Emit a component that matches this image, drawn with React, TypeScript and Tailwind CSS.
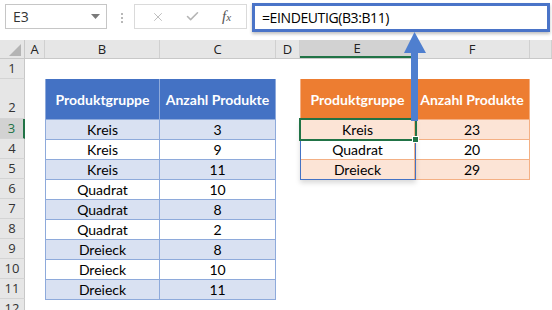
import { X, Check } from 'lucide-react';

const table1 = [
  ['Kreis', '3'],
  ['Kreis', '9'],
  ['Kreis', '11'],
  ['Quadrat', '10'],
  ['Quadrat', '8'],
  ['Quadrat', '2'],
  ['Dreieck', '8'],
  ['Dreieck', '10'],
  ['Dreieck', '11'],
];

const table2 = [
  ['Kreis', '23'],
  ['Quadrat', '20'],
  ['Dreieck', '29'],
];

const colHeads = [
  { key: 'A', cls: 'w-[20px]' },
  { key: 'B', cls: 'w-[115px]' },
  { key: 'C', cls: 'w-[116px]' },
  { key: 'D', cls: 'w-[24px]' },
  { key: 'E', cls: 'w-[115px] bg-[#d2d2d2] border-b-2 border-b-[#217346]' },
  { key: 'F', cls: 'w-[115px]' },
  { key: '', cls: 'flex-1' },
];

const rowHeads = [1, 2, 3, 4, 5, 6, 7, 8, 9, 10, 11, 12];

const cellFont = { fontFamily: 'Lato, "Open Sans", sans-serif' };

export default function App() {
  return (
    <div className="relative w-[552px] h-[310px] overflow-hidden bg-white text-black">
      {/* formula bar */}
      <div className="flex items-start h-[40px] bg-white" style={{ fontFamily: '"Open Sans", "Noto Sans", sans-serif' }}>
        <div className="ml-[5px] mt-[4px] w-[102px] h-[25px] border border-[#c6c6c6] flex items-center justify-between pl-[7px] pr-[6px]">
          <span className="text-[14px] text-[#333]">E3</span>
          <svg width="9" height="5" viewBox="0 0 9 5"><path d="M0 0h9L4.5 5z" fill="#7a7a7a" /></svg>
        </div>
        <div className="ml-[14px] mt-[13px] flex flex-col gap-[2px]">
          <div className="w-[2px] h-[2px] bg-[#b8b8b8]" />
          <div className="w-[2px] h-[2px] bg-[#b8b8b8]" />
          <div className="w-[2px] h-[2px] bg-[#b8b8b8]" />
        </div>
        <div className="ml-[11px] mt-[4px] w-[113px] h-[25px] border border-[#dadada] flex items-center">
          <X className="ml-[16px] w-[14px] h-[14px] text-[#b5b5b5]" strokeWidth={1.5} />
          <Check className="ml-[20px] w-[15px] h-[15px] text-[#b5b5b5]" strokeWidth={2.5} />
          <span className="ml-[22px] text-[15px] italic text-[#555]" style={{ fontFamily: '"Liberation Serif", serif' }}>
            f<span className="text-[11px]">x</span>
          </span>
        </div>
        <div className="ml-[5px] mt-[3px] w-[298px] h-[29px] border-[3px] border-[#4a74c8] flex items-center pl-[7px] shadow-[0_2px_3px_rgba(0,0,0,0.25)] bg-white">
          <span className="text-[14px] text-black tracking-[-0.4px]">=EINDEUTIG(B3:B11)</span>
        </div>
      </div>

      {/* column headers */}
      <div className="flex h-[19px] bg-[#e6e6e6] border-b border-[#c8c8c8] text-[13px] text-[#222]" style={{ fontFamily: '"Open Sans", sans-serif' }}>
        <div className="w-[25px] border-r border-[#c8c8c8] flex items-end justify-end pr-[3px] pb-[2px]">
          <svg width="12" height="12" viewBox="0 0 12 12"><path d="M12 0v12H0z" fill="#b4b4b4" /></svg>
        </div>
        {colHeads.map((c, i) => (
          <div key={i} className={`${c.cls} border-r border-[#d0d0d0] flex items-center justify-center leading-none`}>
            {c.key}
          </div>
        ))}
      </div>

      <div className="flex">
        {/* row headers */}
        <div className="w-[25px] flex flex-col text-[13px] text-[#333]" style={{ fontFamily: '"Open Sans", sans-serif' }}>
          {rowHeads.map((n) => (
            <div
              key={n}
              className={`${n === 2 ? 'h-[40px] items-end pb-[1px]' : 'h-[20px] items-center'} flex justify-center border-b border-[#d4d4d4] ${
                n === 3 ? 'bg-[#d2d2d2] border-r-2 border-r-[#217346] text-[#217346]' : 'bg-[#e6e6e6] border-r border-r-[#c8c8c8]'
              }`}
            >
              {n}
            </div>
          ))}
        </div>

        {/* sheet */}
        <div className="flex flex-col text-[14px]" style={cellFont}>
          <div className="h-[20px]" />
          <div className="flex">
            <div className="w-[20px]" />
            {/* table 1 */}
            <div className="flex flex-col w-[231px]">
              <div className="flex h-[40px] bg-[#4472c4] text-white font-bold">
                <div className="w-[115px] flex items-center justify-center border-l border-r border-[#8eaadb]">Produktgruppe</div>
                <div className="w-[116px] flex items-center justify-center border-r border-[#8eaadb]">Anzahl Produkte</div>
              </div>
              {table1.map(([a, b], i) => (
                <div key={i} className={`flex h-[20px] ${i % 2 === 0 ? 'bg-[#d9e1f2]' : 'bg-white'}`}>
                  <div className="w-[115px] flex items-center justify-center border-l border-r border-t border-[#8eaadb]">{a}</div>
                  <div className="w-[116px] flex items-center justify-center border-r border-t border-[#8eaadb]">{b}</div>
                </div>
              ))}
              <div className="border-t border-[#8eaadb] w-[231px]" />
            </div>
            <div className="w-[24px]" />
            {/* table 2 */}
            <div className="relative flex flex-col w-[230px]">
              <div className="flex h-[40px] bg-[#ed7d31] text-white font-bold">
                <div className="w-[115px] flex items-center justify-center border-l border-r border-[#f4b084]">Produktgruppe</div>
                <div className="w-[115px] flex items-center justify-center border-r border-[#f4b084]">Anzahl Produkte</div>
              </div>
              {table2.map(([a, b], i) => (
                <div key={i} className={`flex h-[20px] ${i % 2 === 0 ? 'bg-[#fce4d6]' : 'bg-white'}`}>
                  <div className="w-[115px] flex items-center justify-center border-l border-r border-t border-[#f4b084]">{a}</div>
                  <div className="w-[115px] flex items-center justify-center border-r border-t border-[#f4b084]">{b}</div>
                </div>
              ))}
              <div className="border-t border-[#f4b084] w-[230px]" />

              {/* spill range */}
              <div className="absolute left-0 top-[40px] w-[116px] h-[61px] border border-[#4472c4] shadow-[0_3px_5px_rgba(0,0,0,0.15)]" />
              {/* active cell */}
              <div className="absolute left-[-1px] top-[39px] w-[118px] h-[23px] border-2 border-[#217346]" />
              <div className="absolute left-[112px] top-[57px] w-[7px] h-[7px] bg-[#217346] border border-white" />
            </div>
          </div>
        </div>
      </div>

      {/* arrow from formula bar to E3 */}
      <svg className="absolute left-[403px] top-[31px]" width="24" height="91" viewBox="0 0 24 91">
        <path d="M11.5 1L1 22h7v68h7V22h8z" fill="#4f7fcf" />
      </svg>
    </div>
  );
}
